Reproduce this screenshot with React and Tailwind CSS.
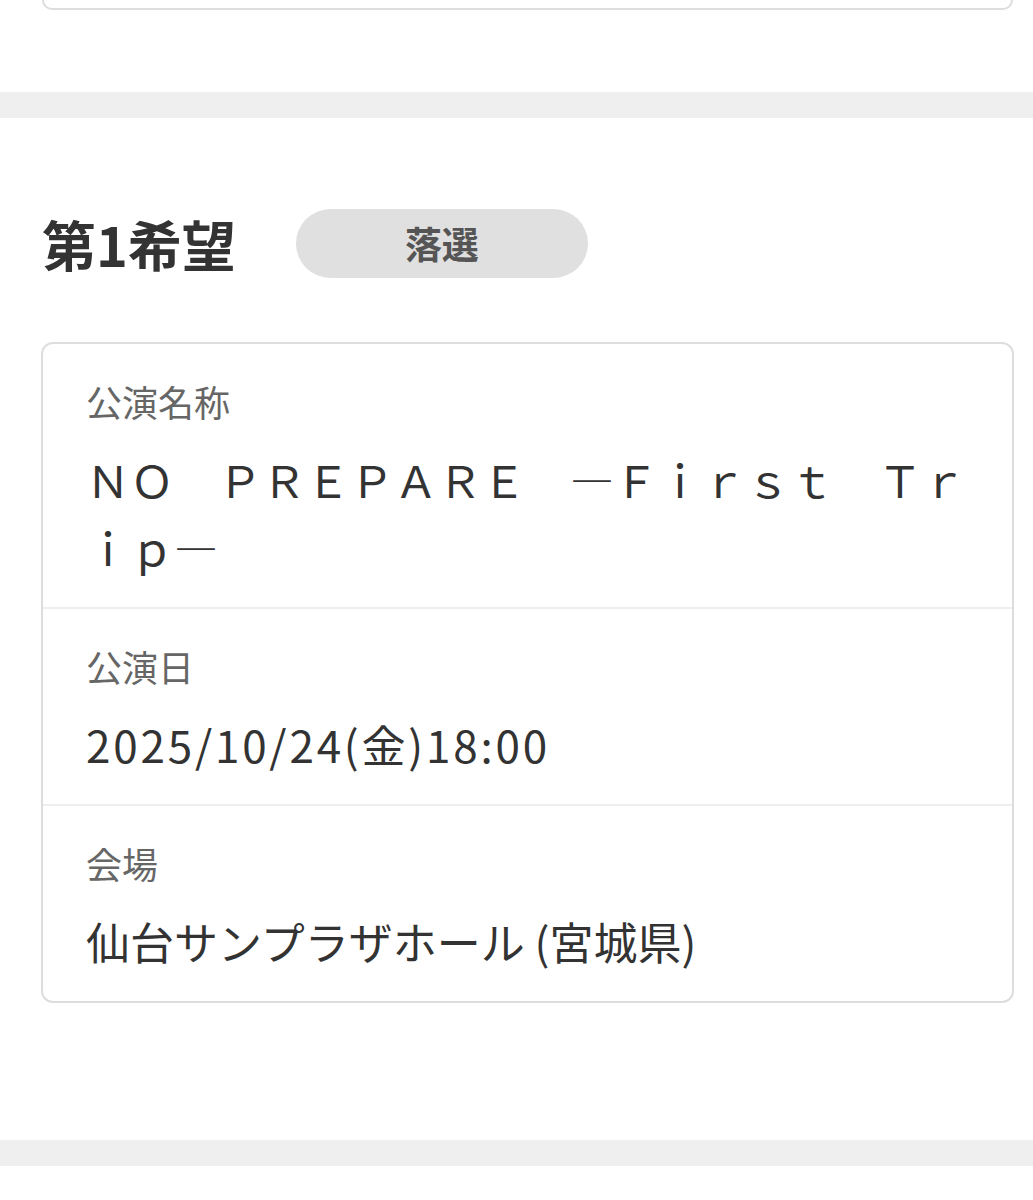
import React from 'react';

const rows = [
  { label: '公演名称', value: 'ＮＯ　ＰＲＥＰＡＲＥ　―Ｆｉｒｓｔ　Ｔｒｉｐ―' },
  { label: '公演日', value: '2025/10/24(金)18:00', tracking: 'tracking-[2.8px]' },
  { label: '会場', value: '仙台サンプラザホール (宮城県)' },
];

function InfoRow({ label, value, tracking, first }) {
  return (
    <div className={`px-[43px] pt-[30px] pb-[26px] ${first ? '' : 'border-t-2 border-[#eeeeee]'}`}>
      <div className="text-[36px] leading-[54px] text-[#666666]">{label}</div>
      <div className={`mt-[17px] text-[44px] leading-[68px] text-[#333333] break-all ${tracking || ''}`}>{value}</div>
    </div>
  );
}

export default function App() {
  return (
    <div lang="ja" className="min-h-screen bg-white font-['Noto_Sans_CJK_JP',sans-serif]">
      {/* tail of the previous entry card */}
      <section className="pb-[82px]">
        <div className="ml-[42px] mr-[20px] h-[10px] border-x-2 border-b-2 border-[#dddddd] rounded-b-[12px]"></div>
      </section>

      <div className="h-[26px] bg-[#efefef]"></div>

      {/* 第1希望 */}
      <section className="pt-[91px] pb-[137px]">
        <div className="flex items-center pl-[42px] gap-[60px]">
          <h2 className="text-[54px] leading-none font-bold text-[#333333]">第1希望</h2>
          <span className="w-[292px] h-[69px] rounded-full bg-[#e0e0e0] flex items-center justify-center text-[37px] font-bold text-[#555555]">
            落選
          </span>
        </div>

        <div className="mt-[64px] ml-[41px] mr-[19px] border-2 border-[#dddddd] rounded-[12px]">
          {rows.map((row, i) => (
            <InfoRow key={row.label} {...row} first={i === 0} />
          ))}
        </div>
      </section>

      <div className="h-[26px] bg-[#efefef]"></div>
    </div>
  );
}
